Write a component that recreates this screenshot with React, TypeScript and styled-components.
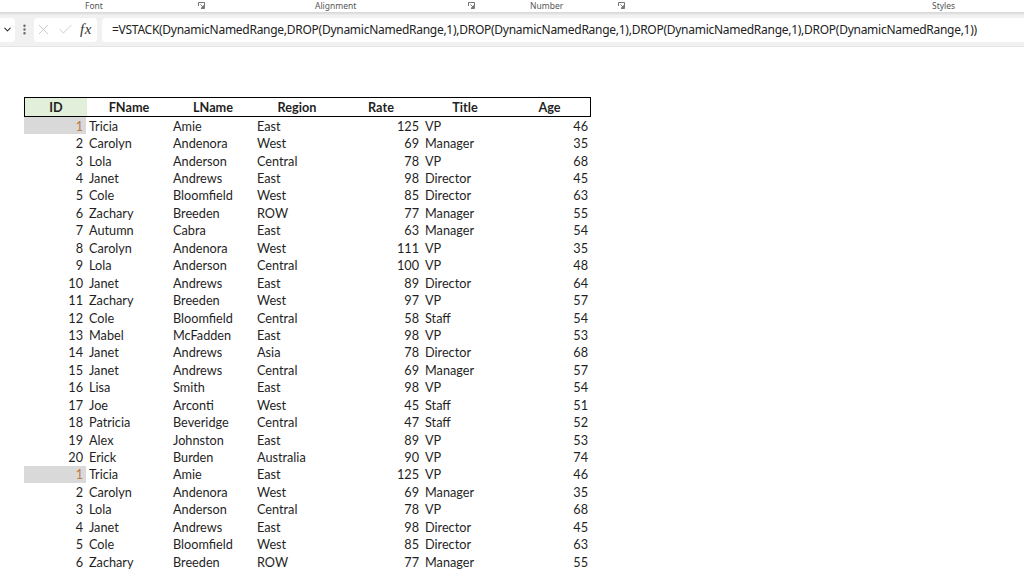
import React from 'react'
import styled, { createGlobalStyle } from 'styled-components'
import { ChevronDown, EllipsisVertical, X, Check } from 'lucide-react'

const GlobalStyle = createGlobalStyle`
  html, body {
    margin: 0;
    padding: 0;
    background: #ffffff;
    overflow: hidden;
  }
  * {
    box-sizing: border-box;
  }
`

const Page = styled.div`
  width: 1024px;
  height: 570px;
  overflow: hidden;
  display: flex;
  flex-direction: column;
  font-family: 'Lato', 'Liberation Sans', sans-serif;
`

const Ribbon = styled.div`
  height: 12px;
  display: flex;
  background: #ffffff;
  font-family: 'Noto Sans', 'Open Sans', sans-serif;
  font-size: 8.5px;
  color: #555;
`

const RibbonGroup = styled.div<{ $width: number; $pad: number }>`
  width: ${(p) => p.$width}px;
  padding-left: ${(p) => p.$pad}px;
  padding-right: 3px;
  display: flex;
  align-items: flex-start;
  line-height: 12px;
`

const GroupLabel = styled.span`
  display: block;
`

const Launcher = styled.span`
  margin-left: auto;
  width: 7px;
  height: 7px;
  margin-top: 2px;
  display: flex;
`

const Shadow = styled.div`
  height: 3px;
  background: linear-gradient(#d6d6d6, #ececec);
`

const FormulaBar = styled.div`
  height: 32px;
  background: #f1f1f1;
  display: flex;
  align-items: center;
  padding: 0 0 2px 0;
  border-bottom: 1px solid #e4e4e4;
`

const NameBox = styled.div`
  width: 15px;
  height: 24px;
  background: #ffffff;
  border-radius: 0 4px 4px 0;
  display: flex;
  align-items: center;
  justify-content: center;
  color: #333;
`

const Grip = styled.div`
  width: 19px;
  display: flex;
  justify-content: center;
  color: #666;
`

const EditButtons = styled.div`
  width: 63px;
  height: 24px;
  background: #ffffff;
  border-radius: 4px;
  display: flex;
  align-items: center;
  padding-left: 1px;
  gap: 5px;
  color: #c4c4c4;
`

const Fx = styled.span`
  margin-left: 1px;
  font-family: 'Liberation Serif', 'DejaVu Serif', serif;
  font-style: italic;
  font-size: 15px;
  color: #333;
  letter-spacing: 0.5px;
`

const FormulaInput = styled.div`
  flex: 1;
  height: 24px;
  margin-left: 5px;
  background: #ffffff;
  border-radius: 4px 0 0 4px;
  display: flex;
  align-items: center;
  padding-left: 10px;
  font-family: 'Noto Sans', 'Open Sans', sans-serif;
  font-size: 12px;
  letter-spacing: -0.27px;
  color: #222;
  white-space: nowrap;
  overflow: hidden;
`

const Sheet = styled.div`
  flex: 1;
  background: #ffffff;
  padding: 50px 0 0 24px;
  overflow: hidden;
`

const Table = styled.div`
  width: 567px;
  font-size: 12.7px;
  color: #1f1f1f;
`

const COLS = '62px 84px 84px 84px 84px 84px 85px'

const HeaderRow = styled.div`
  display: grid;
  grid-template-columns: ${COLS};
  height: 20px;
  border: 1px solid #000;
  border-bottom-width: 1.5px;
  font-weight: 700;
`

const HeaderCell = styled.div<{ $shade?: boolean }>`
  display: flex;
  align-items: center;
  justify-content: center;
  padding-top: 1px;
  background: ${(p) => (p.$shade ? '#e2efda' : 'transparent')};
  line-height: 1;
`

const Row = styled.div`
  display: grid;
  grid-template-columns: ${COLS};
  height: 17.44px;
`

const Cell = styled.div<{ $right?: boolean; $picked?: boolean }>`
  display: flex;
  align-items: center;
  justify-content: ${(p) => (p.$right ? 'flex-end' : 'flex-start')};
  padding: ${(p) => (p.$right ? '0 3px 0 0' : '0 0 0 3px')};
  background: ${(p) => (p.$picked ? '#d9d9d9' : 'transparent')};
  color: ${(p) => (p.$picked ? '#c07a43' : 'inherit')};
  white-space: nowrap;
`

type Person = [number, string, string, string, number, string, number]

const people: Person[] = [
  [1, 'Tricia', 'Amie', 'East', 125, 'VP', 46],
  [2, 'Carolyn', 'Andenora', 'West', 69, 'Manager', 35],
  [3, 'Lola', 'Anderson', 'Central', 78, 'VP', 68],
  [4, 'Janet', 'Andrews', 'East', 98, 'Director', 45],
  [5, 'Cole', 'Bloomfield', 'West', 85, 'Director', 63],
  [6, 'Zachary', 'Breeden', 'ROW', 77, 'Manager', 55],
  [7, 'Autumn', 'Cabra', 'East', 63, 'Manager', 54],
  [8, 'Carolyn', 'Andenora', 'West', 111, 'VP', 35],
  [9, 'Lola', 'Anderson', 'Central', 100, 'VP', 48],
  [10, 'Janet', 'Andrews', 'East', 89, 'Director', 64],
  [11, 'Zachary', 'Breeden', 'West', 97, 'VP', 57],
  [12, 'Cole', 'Bloomfield', 'Central', 58, 'Staff', 54],
  [13, 'Mabel', 'McFadden', 'East', 98, 'VP', 53],
  [14, 'Janet', 'Andrews', 'Asia', 78, 'Director', 68],
  [15, 'Janet', 'Andrews', 'Central', 69, 'Manager', 57],
  [16, 'Lisa', 'Smith', 'East', 98, 'VP', 54],
  [17, 'Joe', 'Arconti', 'West', 45, 'Staff', 51],
  [18, 'Patricia', 'Beveridge', 'Central', 47, 'Staff', 52],
  [19, 'Alex', 'Johnston', 'East', 89, 'VP', 53],
  [20, 'Erick', 'Burden', 'Australia', 90, 'VP', 74],
]

const rows = [...people, ...people.slice(0, 6)]

const formula =
  '=VSTACK(DynamicNamedRange,DROP(DynamicNamedRange,1),DROP(DynamicNamedRange,1),DROP(DynamicNamedRange,1),DROP(DynamicNamedRange,1))'

const LauncherIcon = () => (
  <Launcher>
    <svg width="7" height="7" viewBox="0 0 7 7" fill="none" stroke="#666" strokeWidth="0.9">
      <path d="M0.5 4V0.5H6.5V6.5H3" />
      <path d="M2.5 2.5L5.5 5.5M5.5 3.3V5.5H3.3" />
    </svg>
  </Launcher>
)

const App = (): JSX.Element => {
  return (
    <Page>
      <GlobalStyle />
      <Ribbon>
        <RibbonGroup $width={208} $pad={85}>
          <GroupLabel>Font</GroupLabel>
          <LauncherIcon />
        </RibbonGroup>
        <RibbonGroup $width={270} $pad={107}>
          <GroupLabel>Alignment</GroupLabel>
          <LauncherIcon />
        </RibbonGroup>
        <RibbonGroup $width={150} $pad={52}>
          <GroupLabel>Number</GroupLabel>
          <LauncherIcon />
        </RibbonGroup>
        <RibbonGroup $width={396} $pad={304}>
          <GroupLabel>Styles</GroupLabel>
        </RibbonGroup>
      </Ribbon>
      <Shadow />
      <FormulaBar>
        <NameBox>
          <ChevronDown size={11} strokeWidth={2.4} />
        </NameBox>
        <Grip>
          <EllipsisVertical size={13} strokeWidth={2.5} />
        </Grip>
        <EditButtons>
          <X size={17} strokeWidth={1.2} />
          <Check size={17} strokeWidth={1.2} />
          <Fx>fx</Fx>
        </EditButtons>
        <FormulaInput>{formula}</FormulaInput>
      </FormulaBar>
      <Sheet>
        <Table>
          <HeaderRow>
            <HeaderCell $shade>ID</HeaderCell>
            <HeaderCell>FName</HeaderCell>
            <HeaderCell>LName</HeaderCell>
            <HeaderCell>Region</HeaderCell>
            <HeaderCell>Rate</HeaderCell>
            <HeaderCell>Title</HeaderCell>
            <HeaderCell>Age</HeaderCell>
          </HeaderRow>
          {rows.map(([id, first, last, region, rate, title, age], i) => (
            <Row key={i}>
              <Cell $right $picked={i === 0 || i === 20}>
                {id}
              </Cell>
              <Cell>{first}</Cell>
              <Cell>{last}</Cell>
              <Cell>{region}</Cell>
              <Cell $right>{rate}</Cell>
              <Cell>{title}</Cell>
              <Cell $right>{age}</Cell>
            </Row>
          ))}
        </Table>
      </Sheet>
    </Page>
  )
}

export default App
